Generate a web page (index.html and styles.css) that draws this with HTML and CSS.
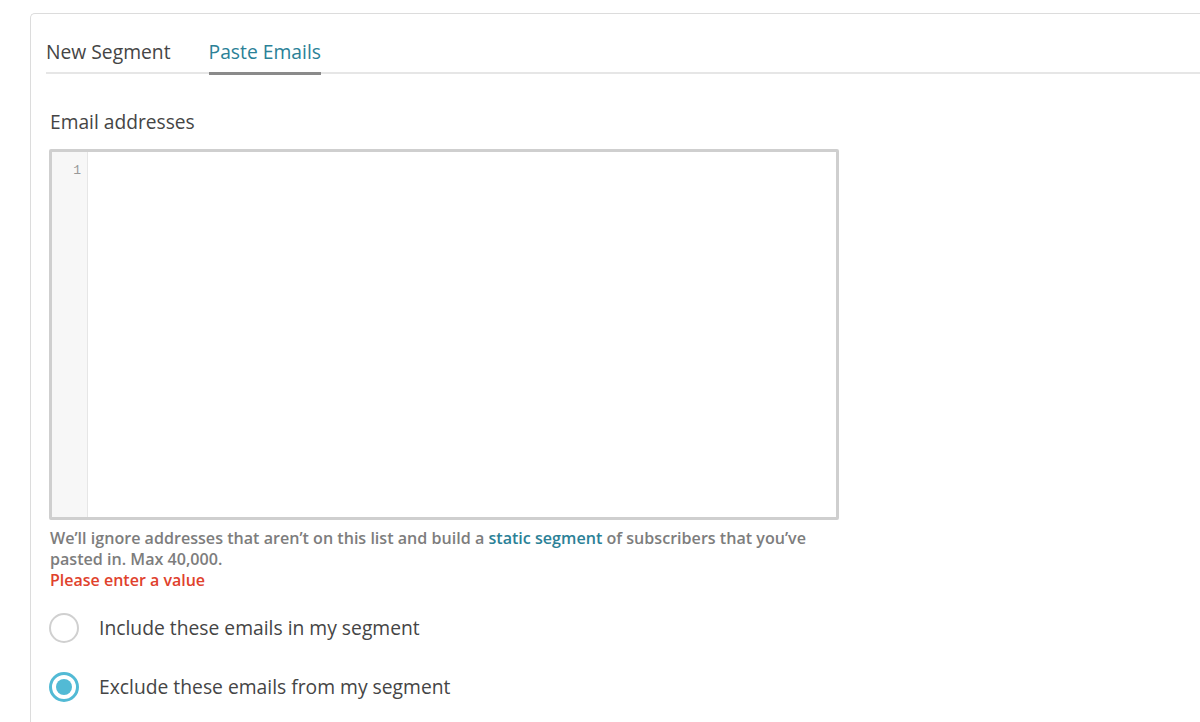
FILE: index.html
```html
<!DOCTYPE html>
<html lang="en">
<head>
  <meta charset="UTF-8" />
  <title>Paste Emails</title>
  <link rel="stylesheet" href="styles.css">
</head>
<body>

  <div class="card">
    <div class="tabs" role="tablist">
      <div class="tab" role="tab">New Segment</div>
      <div class="tab active" role="tab" aria-selected="true">Paste Emails</div>
    </div>

    <div class="panel">
      <label class="field-label" for="emails">Email addresses</label>
      <div class="editor">
        <div class="gutter">1</div>
        <textarea id="emails" spellcheck="false"></textarea>
      </div>
      <p class="help">We’ll ignore addresses that aren’t on this list and build a <a href="#">static segment</a> of subscribers that you’ve pasted in. Max 40,000.</p>
      <p class="error">Please enter a value</p>

      <div class="choices">
        <label class="choice">
          <input type="radio" name="mode" value="include" />
          <span class="dot"></span>
          Include these emails in my segment
        </label>
        <label class="choice">
          <input type="radio" name="mode" value="exclude" checked />
          <span class="dot"></span>
          Exclude these emails from my segment
        </label>
      </div>
    </div>
  </div>

</body>
</html>
```

FILE: styles.css
```css
html, body {
  margin: 0;
  padding: 0;
  background: #fff;
  font-family: "Open Sans", Arial, sans-serif;
  color: #454545;
  overflow: hidden;
}
.card {
  margin: 13px -20px 0 30px;
  height: 740px;
  border: 1px solid #dcdcdc;
  border-right: none;
  border-bottom: none;
  border-top-left-radius: 5px;
  padding-left: 15px;
}
.tabs {
  display: flex;
  gap: 38px;
  padding-top: 25px;
  border-bottom: 2px solid #e6e6e6;
}
.tab {
  font-size: 19.3px;
  line-height: 26px;
  padding-bottom: 7px;
  margin-bottom: -2px;
  border-bottom: 2px solid transparent;
  color: #454545;
}
.tab.active {
  color: #2b8197;
  border-bottom: 3px solid #8a8a8a;
  margin-bottom: -3px;
  padding-bottom: 6px;
}
.panel {
  padding: 35px 0 0 3px;
  width: 790px;
}
.field-label {
  display: block;
  font-size: 19.2px;
  line-height: 26px;
  margin: 0 0 14px 1px;
}
.editor {
  display: flex;
  height: 371px;
  box-sizing: border-box;
  border: 3px solid #cfcfcf;
  border-radius: 2px;
  background: #fff;
}
.gutter {
  width: 36px;
  background: #f7f7f7;
  border-right: 1px solid #e6e6e6;
  font-family: "Liberation Mono", "DejaVu Sans Mono", monospace;
  font-size: 13px;
  color: #999;
  text-align: right;
  padding: 11px 6px 0 0;
  box-sizing: border-box;
  line-height: 16px;
}
.editor textarea {
  flex: 1;
  border: none;
  outline: none;
  resize: none;
  margin: 0;
  padding: 10px;
  font-family: "Liberation Mono", monospace;
  font-size: 13px;
}
.help {
  margin: 8px 0 0 1px;
  font-size: 16.1px;
  line-height: 21px;
  font-weight: 600;
  color: #7d7d7d;
}
.help a {
  color: #2b8197;
  text-decoration: none;
}
.error {
  margin: 0 0 0 1px;
  font-size: 16px;
  line-height: 21px;
  font-weight: 600;
  color: #e0412c;
}
.choices {
  display: flex;
  flex-direction: column;
  gap: 29px;
  margin-top: 22px;
}
.choice {
  display: flex;
  align-items: center;
  gap: 20px;
  font-size: 19.3px;
  line-height: 30px;
  color: #454545;
  cursor: pointer;
}
.choice input {
  display: none;
}
.dot {
  width: 30px;
  height: 30px;
  box-sizing: border-box;
  border: 2px solid #d0d0d0;
  border-radius: 50%;
  position: relative;
}
.choice input:checked + .dot {
  border: 3px solid #52bad5;
}
.choice input:checked + .dot::after {
  content: "";
  position: absolute;
  top: 4px;
  left: 4px;
  width: 16px;
  height: 16px;
  border-radius: 50%;
  background: #52bad5;
}
```
